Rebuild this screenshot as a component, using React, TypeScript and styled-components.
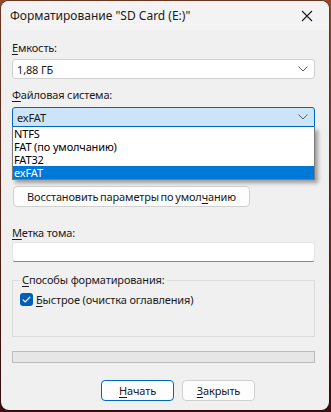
import styled, { createGlobalStyle } from "styled-components";

const Global = createGlobalStyle`
  html, body {
    margin: 0;
    padding: 0;
    width: 331px;
    height: 412px;
    overflow: hidden;
    background: linear-gradient(180deg, #8d4a2c 0%, #6b2a1c 60%, #3f0d12 100%);
    font-family: "Noto Sans", "Segoe UI", sans-serif;
    font-size: 11px;
    letter-spacing: -0.15px;
    color: #1a1a1a;
  }
`;

const Window = styled.div`
  position: relative;
  margin: 1px 2px 0 1px;
  width: 328px;
  height: 409px;
  background: #f0f0f0;
  border-radius: 8px;
  box-shadow: 0 0 0 1px rgba(0, 0, 0, 0.25);
  display: flex;
  flex-direction: column;
  overflow: hidden;
`;

const TitleBar = styled.div`
  height: 29px;
  flex-shrink: 0;
  display: flex;
  align-items: center;
  justify-content: space-between;
  padding: 0 10px 0 9px;
  background: #f3f3f3;
  font-size: 12px;
  letter-spacing: 0;
  color: #1a1a1a;
`;

const Close = styled.div`
  width: 16px;
  height: 16px;
  display: flex;
  align-items: center;
  justify-content: center;
  margin-right: 4px;
`;

const Body = styled.div`
  padding: 0 14px 0 11px;
  display: flex;
  flex-direction: column;
`;

const Label = styled.div<{ $top: number }>`
  margin-top: ${({ $top }) => $top}px;
  height: 16px;
  line-height: 16px;
`;

const U = styled.span`
  text-decoration: underline;
  text-underline-offset: 2px;
`;

const Combo = styled.div<{ $active?: boolean }>`
  margin-top: ${({ $active }) => ($active ? 4 : 3)}px;
  height: 20px;
  box-sizing: border-box;
  border: 1px solid ${({ $active }) => ($active ? "#0067c0" : "#d0d0d0")};
  border-radius: ${({ $active }) => ($active ? "3px 3px 0 0" : "3px")};
  background: ${({ $active }) => ($active ? "#cce4f7" : "#ffffff")};
  display: flex;
  align-items: center;
  justify-content: space-between;
  padding: 0 6px 0 4px;
`;

const ComboWrap = styled.div`
  position: relative;
`;

const DropList = styled.div`
  position: absolute;
  left: 0;
  right: 0;
  top: 24px;
  background: #ffffff;
  border: 1px solid #7a7a7a;
  border-top: none;
  box-shadow: 3px 3px 4px rgba(0, 0, 0, 0.35);
  z-index: 2;
`;

const Item = styled.div<{ $selected?: boolean }>`
  height: 13px;
  line-height: 13px;
  padding-left: 1px;
  background: ${({ $selected }) => ($selected ? "#0078d7" : "transparent")};
  color: ${({ $selected }) => ($selected ? "#ffffff" : "#000000")};
`;

const Button = styled.button<{ $primary?: boolean }>`
  height: 21px;
  box-sizing: border-box;
  font-family: inherit;
  font-size: 11px;
  letter-spacing: -0.15px;
  color: #1a1a1a;
  background: #fdfdfd;
  border: 1px solid ${({ $primary }) => ($primary ? "#0067c0" : "#d0d0d0")};
  border-radius: 4px;
  padding: 0;
  white-space: nowrap;
`;

const RestoreButton = styled(Button)`
  margin-top: 59px;
  margin-left: 1px;
  width: 237px;
  word-spacing: -1px;
`;

const TextInput = styled.div`
  margin-top: 1px;
  height: 20px;
  box-sizing: border-box;
  background: #ffffff;
  border: 1px solid #e5e5e5;
  border-bottom-color: #8a8a8a;
  border-radius: 3px;
`;

const Group = styled.fieldset`
  margin: 11px 0 0 0;
  padding: 0 8px 0 7px;
  height: 64px;
  box-sizing: border-box;
  border: 1px solid #dcdcdc;
  border-radius: 0;
  display: flex;
  flex-direction: column;
  legend {
    padding: 0 2px;
    margin-left: 0;
    line-height: 14px;
  }
`;

const CheckRow = styled.label`
  margin-top: 5px;
  display: flex;
  align-items: center;
  gap: 3px;
  height: 14px;
`;

const Box = styled.span`
  width: 13px;
  height: 13px;
  border-radius: 3px;
  background: #005fb8;
  display: inline-flex;
  align-items: center;
  justify-content: center;
`;

const Progress = styled.div`
  margin-top: 14px;
  height: 12px;
  box-sizing: border-box;
  background: #e6e6e6;
  border: 1px solid #bcbcbc;
`;

const Footer = styled.div`
  margin-top: 17px;
  display: flex;
  gap: 8px;
  padding-left: 89px;
`;

const FooterButton = styled(Button)`
  width: 73px;
`;

const Chevron = () => (
  <svg width="10" height="6" viewBox="0 0 10 6">
    <path d="M0.5 0.5 L5 5 L9.5 0.5" fill="none" stroke="#5c5c5c" strokeWidth="1" />
  </svg>
);

export default function App() {
  return (
    <>
      <Global />
      <Window>
        <TitleBar>
          <span>Форматирование "SD Card (E:)"</span>
          <Close>
            <svg width="12" height="12" viewBox="0 0 12 12">
              <path d="M1 1 L11 11 M11 1 L1 11" stroke="#1a1a1a" strokeWidth="1.1" />
            </svg>
          </Close>
        </TitleBar>
        <Body>
          <Label $top={10}>
            <U>Е</U>мкость:
          </Label>
          <Combo>
            <span>1,88 ГБ</span>
            <Chevron />
          </Combo>
          <Label $top={8}>
            <U>Ф</U>айловая система:
          </Label>
          <ComboWrap>
            <Combo $active>
              <span>exFAT</span>
              <Chevron />
            </Combo>
            <DropList>
              <Item>NTFS</Item>
              <Item>FAT (по умолчанию)</Item>
              <Item>FAT32</Item>
              <Item $selected>exFAT</Item>
            </DropList>
          </ComboWrap>
          <RestoreButton>
            Восстановить параметры по умол<U>ч</U>анию
          </RestoreButton>
          <Label $top={18}>
            <U>М</U>етка тома:
          </Label>
          <TextInput />
          <Group>
            <legend>
              <U>С</U>пособы форматирования:
            </legend>
            <CheckRow>
              <Box>
                <svg width="9" height="7" viewBox="0 0 9 7">
                  <path d="M0.8 3.6 L3.2 6 L8.2 0.8" fill="none" stroke="#ffffff" strokeWidth="1.2" />
                </svg>
              </Box>
              <span>
                <U>Б</U>ыстрое (очистка оглавления)
              </span>
            </CheckRow>
          </Group>
          <Progress />
          <Footer>
            <FooterButton $primary>
              <U>Н</U>ачать
            </FooterButton>
            <FooterButton>
              <U>З</U>акрыть
            </FooterButton>
          </Footer>
        </Body>
      </Window>
    </>
  );
}
